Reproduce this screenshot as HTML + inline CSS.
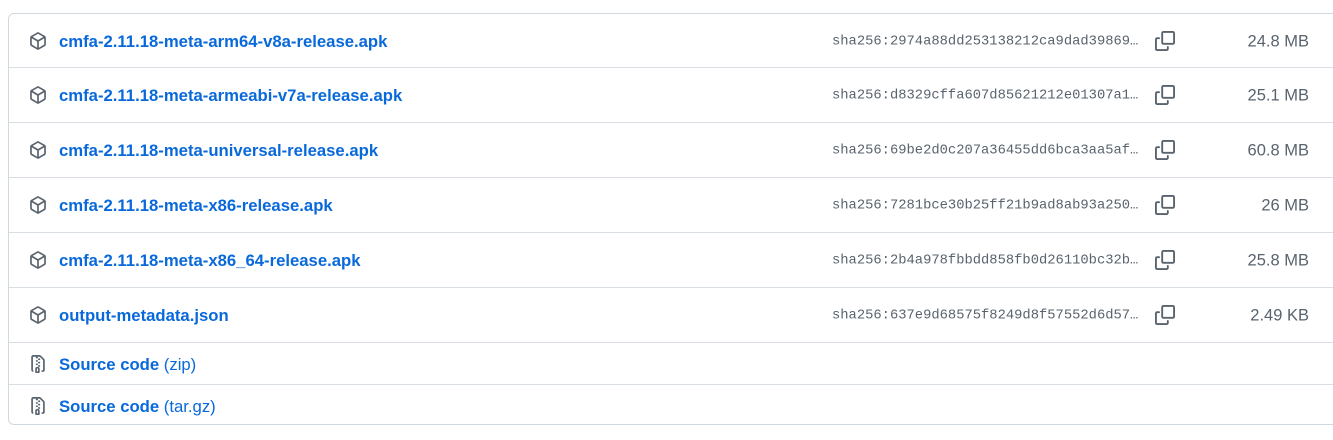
<!DOCTYPE html><html><head><style>
body{margin:0;background:#fff;font-family:"Liberation Sans",sans-serif;}
.box{position:absolute;left:8px;top:13px;width:1340px;height:412px;border:1px solid #d1d9e0;border-radius:6px;box-sizing:border-box;overflow:hidden}
.row{position:relative;height:55px;border-bottom:1px solid #d8dee4;box-sizing:border-box}
.row:first-child{height:54px}
.row.s{height:42px}
.row.s:last-child{border-bottom:none}
.ic{position:absolute;left:20px;top:50%;margin-top:-9px}
.name{position:absolute;left:50px;top:50%;transform:translateY(-45%);color:#0969da;font-weight:bold;font-size:16.7px}
.name span{font-weight:normal}
.h{position:absolute;left:823px;top:50%;transform:translateY(-45%);font-family:"Liberation Mono",monospace;font-size:13.8px;color:#59636e}
.cp{position:absolute;left:1146px;top:50%;margin-top:-10px}
.sz{position:absolute;right:38px;top:50%;transform:translateY(-45%);font-size:16.5px;color:#59636e}
</style></head><body>
<svg width="0" height="0" style="position:absolute"><defs>
<path id="pk" d="m8.878.392 5.25 3.045c.54.314.872.89.872 1.514v6.098a1.75 1.75 0 0 1-.872 1.514l-5.25 3.045a1.75 1.75 0 0 1-1.756 0l-5.25-3.045A1.75 1.75 0 0 1 1 11.049V4.951c0-.624.332-1.201.872-1.514L7.122.392a1.75 1.75 0 0 1 1.756 0ZM7.875 1.69l-4.63 2.685L8 7.133l4.755-2.758-4.63-2.685a.248.248 0 0 0-.25 0ZM2.5 5.677v5.372c0 .09.047.171.125.216l4.625 2.683V8.432Zm6.25 8.271 4.625-2.683a.25.25 0 0 0 .125-.216V5.677L8.75 8.432Z"/>
<g id="cpy"><path d="M0 6.75C0 5.784.784 5 1.750 5h1.5a.75.75 0 0 1 0 1.5h-1.5a.25.25 0 0 0-.25.25v7.5c0 .138.112.25.25.25h7.5a.25.25 0 0 0 .25-.25v-1.5a.75.75 0 0 1 1.5 0v1.5A1.75 1.75 0 0 1 9.25 16h-7.5A1.75 1.75 0 0 1 0 14.25Z"/><path d="M5 1.75C5 .784 5.784 0 6.75 0h7.5C15.216 0 16 .784 16 1.75v7.5A1.75 1.75 0 0 1 14.25 11h-7.5A1.75 1.75 0 0 1 5 9.25Zm1.75-.25a.25.25 0 0 0-.25.25v7.5c0 .138.112.25.25.25h7.5a.25.25 0 0 0 .25-.25v-7.5a.25.25 0 0 0-.25-.25Z"/></g>
<path id="zp" d="M3.5 1.75v11.5c0 .09.048.173.126.217a.75.75 0 0 1-.752 1.298A1.748 1.748 0 0 1 2 13.25V1.75C2 .784 2.784 0 3.75 0h5.586c.464 0 .909.185 1.237.513l2.914 2.914c.329.328.513.773.513 1.237v8.586A1.75 1.75 0 0 1 12.25 15h-.5a.75.75 0 0 1 0-1.5h.5a.25.25 0 0 0 .25-.25V4.664a.25.25 0 0 0-.073-.177L9.513 1.573a.25.25 0 0 0-.177-.073H7.25a.75.75 0 0 1 0 1.5h-.5a.75.75 0 0 1 0-1.5h-3a.25.25 0 0 0-.25.25Zm3.75 8.75h.5c.966 0 1.750.784 1.750 1.75v3a.75.75 0 0 1-.75.75h-2.5a.75.75 0 0 1-.75-.75v-3c0-.966.784-1.75 1.75-1.75ZM6 5.25a.75.75 0 0 1 .75-.75h.5a.75.75 0 0 1 0 1.5h-.5A.75.75 0 0 1 6 5.25Zm.75 2.25h.5a.75.75 0 0 1 0 1.5h-.5a.75.75 0 0 1 0-1.5ZM8 6.75A.75.75 0 0 1 8.75 6h.5a.75.75 0 0 1 0 1.5h-.5A.75.75 0 0 1 8 6.75ZM8.75 3h.5a.75.75 0 0 1 0 1.5h-.5a.75.75 0 0 1 0-1.5ZM8 9.75A.75.75 0 0 1 8.75 9h.5a.75.75 0 0 1 0 1.5h-.5A.75.75 0 0 1 8 9.75Zm-1 2.5v2.25h1v-2.25a.25.25 0 0 0-.25-.25h-.5a.25.25 0 0 0-.25.25Z"/>
</defs></svg>
<div class="box">
<div class="row"><svg class="ic" width="18" height="18" viewBox="0 0 16 16" fill="#59636e"><use href="#pk"/></svg><div class="name">cmfa-2.11.18-meta-arm64-v8a-release.apk</div><div class="h">sha256:2974a88dd253138212ca9dad39869…</div><svg class="cp" width="20" height="20" viewBox="0 0 16 16" fill="#59636e"><use href="#cpy"/></svg><div class="sz">24.8 MB</div></div>
<div class="row"><svg class="ic" width="18" height="18" viewBox="0 0 16 16" fill="#59636e"><use href="#pk"/></svg><div class="name">cmfa-2.11.18-meta-armeabi-v7a-release.apk</div><div class="h">sha256:d8329cffa607d85621212e01307a1…</div><svg class="cp" width="20" height="20" viewBox="0 0 16 16" fill="#59636e"><use href="#cpy"/></svg><div class="sz">25.1 MB</div></div>
<div class="row"><svg class="ic" width="18" height="18" viewBox="0 0 16 16" fill="#59636e"><use href="#pk"/></svg><div class="name">cmfa-2.11.18-meta-universal-release.apk</div><div class="h">sha256:69be2d0c207a36455dd6bca3aa5af…</div><svg class="cp" width="20" height="20" viewBox="0 0 16 16" fill="#59636e"><use href="#cpy"/></svg><div class="sz">60.8 MB</div></div>
<div class="row"><svg class="ic" width="18" height="18" viewBox="0 0 16 16" fill="#59636e"><use href="#pk"/></svg><div class="name">cmfa-2.11.18-meta-x86-release.apk</div><div class="h">sha256:7281bce30b25ff21b9ad8ab93a250…</div><svg class="cp" width="20" height="20" viewBox="0 0 16 16" fill="#59636e"><use href="#cpy"/></svg><div class="sz">26 MB</div></div>
<div class="row"><svg class="ic" width="18" height="18" viewBox="0 0 16 16" fill="#59636e"><use href="#pk"/></svg><div class="name">cmfa-2.11.18-meta-x86_64-release.apk</div><div class="h">sha256:2b4a978fbbdd858fb0d26110bc32b…</div><svg class="cp" width="20" height="20" viewBox="0 0 16 16" fill="#59636e"><use href="#cpy"/></svg><div class="sz">25.8 MB</div></div>
<div class="row"><svg class="ic" width="18" height="18" viewBox="0 0 16 16" fill="#59636e"><use href="#pk"/></svg><div class="name">output-metadata.json</div><div class="h">sha256:637e9d68575f8249d8f57552d6d57…</div><svg class="cp" width="20" height="20" viewBox="0 0 16 16" fill="#59636e"><use href="#cpy"/></svg><div class="sz">2.49 KB</div></div>
<div class="row s"><svg class="ic" width="18" height="18" viewBox="0 0 16 16" fill="#59636e"><use href="#zp"/></svg><div class="name">Source code <span>(zip)</span></div></div>
<div class="row s"><svg class="ic" width="18" height="18" viewBox="0 0 16 16" fill="#59636e"><use href="#zp"/></svg><div class="name">Source code <span>(tar.gz)</span></div></div>
</div></body></html>
